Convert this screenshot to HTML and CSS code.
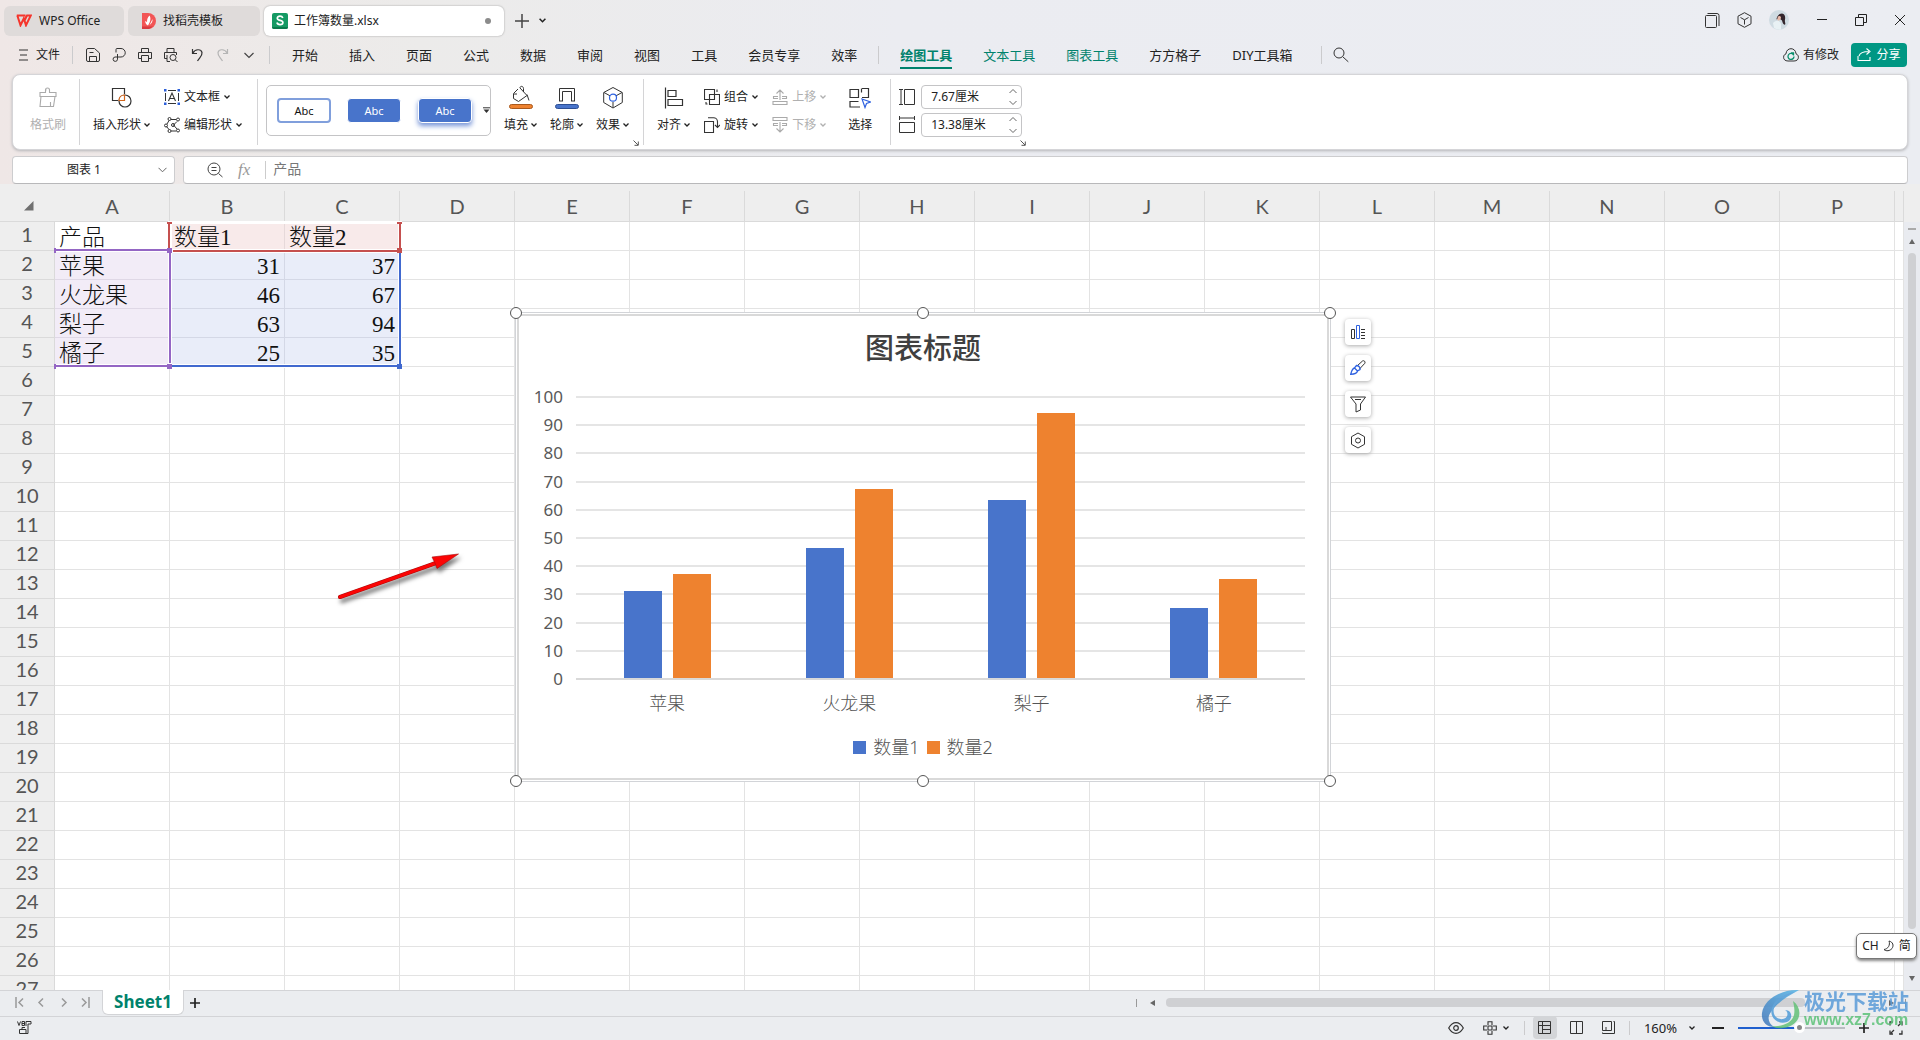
FILE: index.html
```html
<!DOCTYPE html>
<html lang="zh-CN">
<head>
<meta charset="utf-8">
<title>工作簿数量.xlsx - WPS Office</title>
<link rel="stylesheet" href="styles.css">
</head>
<body>
<svg class="defs" aria-hidden="true">
  <symbol id="chev" viewBox="0 0 6 6"><path d="M.5 1.500 3 4 5.500 1.500" fill="none" stroke="currentColor" stroke-width="1.300"/></symbol>
  <symbol id="launch" viewBox="0 0 6 6"><path d="M.5.5 5 5M5.300 1.500V5.300H1.500" fill="none" stroke="currentColor"/></symbol>
</svg>

<header class="titlebar">
  <nav class="doc-tabs">
    <button class="doc-tab tab-home"><svg width="16" height="13" viewBox="0 0 16 13"><path d="M.8 1.500H9.500M1.300 1.500 4.500 11.300 7.800 4.500 10 11.300 14.800 1.500H11L8.300 7" fill="none" stroke="#f5352c" stroke-width="2"/></svg>WPS Office</button>
    <button class="doc-tab tab-tpl"><svg width="15" height="16" viewBox="0 0 15 16"><path d="M1 0h6a8 8 0 0 1 0 16H1z" fill="#f25555"/><path d="M1 13.500h11L8 16H1z" fill="#d93a3f"/><path d="M8.500 2.500c2 3 .5 7-1.500 10-2-1-2.500-2-3-4.500l2 1c0-3 .5-4.500 2.500-6.500zM11.500 6c.5 3-1.500 5-3 6z" fill="#fff"/></svg>找稻壳模板</button>
    <button class="doc-tab tab-file active"><svg width="16" height="16" viewBox="0 0 16 16"><rect width="16" height="16" rx="2" fill="#159a64"/><path d="M0 14h16v0a2 2 0 0 1-2 2H2a2 2 0 0 1-2-2z" fill="#0b7a4c"/><path d="M10.800 5C10.300 3.600 9.300 3.200 8 3.200c-1.600 0-2.700.8-2.700 2 0 2.800 5.600 1.500 5.600 4.300 0 1.300-1.200 2.100-2.900 2.100-1.600 0-2.700-.7-3-2.100" fill="none" stroke="#fff" stroke-width="1.700"/></svg>工作簿数量.xlsx<span class="dot"></span></button>
    <button class="icon-btn new-tab" aria-label="新建"><svg width="14" height="14" viewBox="0 0 14 14"><path d="M7 0v14M0 7h14" stroke="#444" stroke-width="1.500"/></svg></button>
    <button class="icon-btn" aria-label="更多"><svg width="7" height="7"><use href="#chev"/></svg></button>
  </nav>
  <div class="window-tools">
    <button class="icon-btn" aria-label="窗口"><svg width="15" height="15" viewBox="0 0 15 15"><rect x=".5" y="2.500" width="11" height="12" rx="1" fill="none" stroke="#333"/><path d="M2.500.5H12a2 2 0 0 1 2 2V13" fill="none" stroke="#333"/></svg></button>
    <button class="icon-btn" aria-label="应用"><svg width="15" height="16" viewBox="0 0 15 16"><path d="M7.500.7 14 4.200v7.600l-6.500 3.500L1 11.800V4.200zM3.500 5.500l4 2.300 4-2.300M7.500 7.800v4.700" fill="none" stroke="#333"/></svg></button>
    <button class="icon-btn" aria-label="账户"><svg width="20" height="20" viewBox="0 0 20 20"><circle cx="10" cy="10" r="10" fill="#cfdbe2"/><path d="M13 3.500c3 .5 3.500 3 3 6s1 4 0 5-2.500-1.500-3-4l-2.500-2C9 9 8 9 7.500 9.500 7.500 7 9.500 3.500 13 3.500z" fill="#33262d"/><path d="M9 6.500c1-1 3-.5 3 1s-1 3-2.500 3S8.200 8 9 6.500z" fill="#e6b9a8"/><path d="M4 13c3-3 7-3 8 1l0 5.500a10 10 0 0 1-7-1.500z" fill="#e8f1f4"/></svg></button>
    <button class="icon-btn win" aria-label="最小化"><svg width="12" height="12" viewBox="0 0 12 12"><path d="M1 5.500h10" stroke="#222"/></svg></button>
    <button class="icon-btn win" aria-label="还原"><svg width="12" height="12" viewBox="0 0 12 12"><path d="M.5 3.500h8v8h-8zM3.500 3.500v-3h8v8h-3" fill="none" stroke="#222"/></svg></button>
    <button class="icon-btn win" aria-label="关闭"><svg width="12" height="12" viewBox="0 0 12 12"><path d="M1 1l10 10M11 1 1 11" stroke="#222"/></svg></button>
  </div>
</header>

<div class="menubar">
  <button class="file-btn"><svg width="9" height="12" viewBox="0 0 9 12"><path d="M0 1h9M1 6h7M0 11h9" stroke="#333"/></svg>文件</button>
  <span class="sep"></span>
  <div class="quick">
    <button class="icon-btn" aria-label="保存"><svg width="14" height="14" viewBox="0 0 14 14"><path d="M.5 2a1.500 1.500 0 0 1 1.500-1.500h6.500l5 4.500V12a1.500 1.500 0 0 1-1.500 1.500H2A1.500 1.500 0 0 1 .5 12zM3.500 13V8.500h7V13M3.500 4.500h4" fill="none" stroke="#333"/></svg></button>
    <button class="icon-btn" aria-label="导出"><svg width="14" height="14" viewBox="0 0 14 14"><path d="M4 4.500V1.500a1 1 0 0 1 1-1h4a4 4 0 0 1 0 8.500H3a2.200 2.200 0 1 0 2.500 2.200V6" fill="none" stroke="#333"/></svg></button>
    <button class="icon-btn" aria-label="打印"><svg width="14" height="14" viewBox="0 0 14 14"><path d="M3.500 4V.5h7V4M3 10.500H.5V4.500h13v6H11M3.500 7.500h7v6h-7z" fill="none" stroke="#333"/></svg></button>
    <button class="icon-btn" aria-label="打印预览"><svg width="14" height="14" viewBox="0 0 14 14"><path d="M3 4V.5h7V4M3 10.500H.5V4.500h12V7M3 7v6.500h3" fill="none" stroke="#333"/><circle cx="9" cy="9.500" r="3" fill="none" stroke="#333"/><path d="M11.200 11.700 13.500 14" stroke="#333"/></svg></button>
    <button class="icon-btn" aria-label="撤消"><svg width="14" height="14" viewBox="0 0 14 14"><path d="M2.500 1v4.500H7M3 5C5 1 11 .5 12 4.500c.5 3-2 4.500-4.500 8.500" fill="none" stroke="#333" stroke-width="1.200"/></svg></button>
    <button class="icon-btn" aria-label="恢复"><svg width="14" height="14" viewBox="0 0 14 14"><path d="M11.500 1v4.500H7M11 5C9 1 3 .5 2 4.500c-.5 3 2 4.500 4.500 8.500" fill="none" stroke="#b5b5b5" stroke-width="1.200"/></svg></button>
    <button class="icon-btn" aria-label="自定义"><svg width="14" height="14" viewBox="0 0 14 14"><path d="M2.500 5 7 9.500 11.500 5" fill="none" stroke="#444" stroke-width="1.200"/></svg></button>
  </div>
  <span class="sep"></span>
  <nav class="menus">
    <button>开始</button><button>插入</button><button>页面</button><button>公式</button><button>数据</button><button>审阅</button><button>视图</button><button>工具</button><button>会员专享</button><button>效率</button>
  </nav>
  <span class="sep"></span>
  <nav class="menus context">
    <button class="teal current">绘图工具</button><button class="teal">文本工具</button><button class="teal">图表工具</button><button>方方格子</button><button>DIY工具箱</button>
  </nav>
  <span class="sep"></span>
  <button class="icon-btn find" aria-label="搜索"><svg width="16" height="16" viewBox="0 0 16 16"><circle cx="6" cy="6" r="5" fill="none" stroke="#333"/><path d="m9.800 9.800 5.500 5" stroke="#333"/></svg></button>
  <div class="share-area">
    <button class="changes"><svg width="16" height="14" viewBox="0 0 16 14"><path d="M5 13C2 13 .6 11.300.6 9.300.6 7.500 1.500 6.300 3 5.800 3.200 2.500 5.500.7 8 .7s4.800 1.800 5 5.100c1.500.5 2.400 1.700 2.400 3.500C15.400 11.300 14 13 11 13z" fill="none" stroke="#333"/><path d="M10.300 6.500a3 3 0 1 0 .7 2M8 5h2.500v2.500" fill="none" stroke="#0a8f6c" stroke-width="1.300"/></svg>有修改</button>
    <button class="share"><svg width="15" height="14" viewBox="0 0 15 14"><path d="M1 8v4.500h12V9M2 8c1-3.500 4-4.500 10-4.500M9.500.5l3.500 3-3.500 3" fill="none" stroke="#fff" stroke-width="1.100"/></svg>分享</button>
  </div>
</div>

<section class="ribbon">
  <div class="group g-brush">
    <button class="big off"><svg width="20" height="24" viewBox="0 0 20 24"><path d="M2 11.500v-4h5.500V5a2 2 0 1 1 4 0v2.500H18v4zM3 11.500 2 21.500h13.500L17 11.500M12.500 21v-4M8 4.500v1" fill="none" stroke="#aaa" stroke-width="1.100"/></svg><span>格式刷</span></button>
  </div>
  <div class="group g-insert">
    <button class="big"><svg width="22" height="24" viewBox="0 0 22 24"><path d="M7 15.500H1.500v-12h12V9" fill="none" stroke="#333" stroke-width="1.200"/><circle cx="14" cy="16" r="6" fill="none" stroke="#333" stroke-width="1.200"/><path d="M8 15.500C8 12 10.500 10 13.500 10v5.500z" fill="#fff" stroke="#d2651c" stroke-width="1.200"/></svg><span>插入形状<svg class="c"><use href="#chev"/></svg></span></button>
    <div class="pair">
      <button><svg width="16" height="16" viewBox="0 0 16 16"><path d="M1.500 4v8M14.500 4v8M4 1.500h8M4 14.500h8" stroke="#333"/><path d="M0 0h2.500v2.500H0zM13.500 0H16v2.500h-2.500zM0 13.500h2.500V16H0zM13.500 13.500H16V16h-2.500z" fill="#2b5fd9"/><path d="M4.500 12 8 4l3.500 8M5.700 9.500h4.600" fill="none" stroke="#333" stroke-width="1.100"/></svg>文本框<svg class="c"><use href="#chev"/></svg></button>
      <button><svg width="16" height="16" viewBox="0 0 16 16"><g fill="none" stroke="#333"><path d="M3 7 5 3.500M7 2.500h5M13 4.500 9.500 8l3.500 4M12 14H7M5 12.500 2.500 9.500"/><circle cx="5.500" cy="2" r="1.500"/><circle cx="14" cy="2.500" r="1.500"/><circle cx="2" cy="8.500" r="1.500"/><circle cx="9" cy="8" r="1.500"/><circle cx="5.500" cy="14" r="1.500"/><circle cx="14" cy="13.500" r="1.500"/></g></svg>编辑形状<svg class="c"><use href="#chev"/></svg></button>
    </div>
  </div>
  <div class="group g-style">
    <div class="gallery">
      <button class="sw sw-line">Abc</button><button class="sw sw-fill">Abc</button><button class="sw sw-glow">Abc</button>
      <button class="more" aria-label="更多样式"><svg width="7" height="7" viewBox="0 0 7 7"><path d="M0 .8h7" stroke="#333"/><path d="M.5 2.500h6L3.500 6z" fill="#333"/></svg></button>
    </div>
    <button class="big"><svg width="24" height="24" viewBox="0 0 24 24"><path d="M9 4 4.500 8.500v5l5 3 8.500-6L11 3c-.5-1.500 3-3 3.500.5V7M18 9.500l2 6M5 9h3" fill="none" stroke="#333"/><rect x=".5" y="19.500" width="23" height="4" rx="2" fill="#ee822f" stroke="#a8581c"/></svg><span>填充<svg class="c"><use href="#chev"/></svg></span></button>
    <button class="big"><svg width="24" height="24" viewBox="0 0 24 24"><path d="M4.500 16V3.500h15V16M7.500 16V6.500h9V16M4 16h4M16 16h4" fill="none" stroke="#333"/><rect x=".5" y="19.500" width="23" height="4" rx="2" fill="#4874cb" stroke="#2d4f94"/></svg><span>轮廓<svg class="c"><use href="#chev"/></svg></span></button>
    <button class="big"><svg width="24" height="24" viewBox="0 0 24 24"><path d="M12 2.500 21.300 7.500v10L12 23l-9.300-5.500v-10zM3 7.500l6 3.300M21 7.500l-6 3.300M12 17v5.500" fill="none" stroke="#333"/><circle cx="12" cy="12.700" r="3.500" fill="none" stroke="#2f62e0" stroke-width="1.200"/></svg><span>效果<svg class="c"><use href="#chev"/></svg></span></button>
    <button class="launch" aria-label="形状格式"><svg width="6" height="6"><use href="#launch"/></svg></button>
  </div>
  <div class="group g-arrange">
    <button class="big"><svg width="20" height="24" viewBox="0 0 20 24"><path d="M1.500 2.500v21M4 5.500h8v6H4zM4 14.500h14.500v6H4z" fill="none" stroke="#333" stroke-width="1.200"/></svg><span>对齐<svg class="c"><use href="#chev"/></svg></span></button>
    <div class="pair">
      <button><svg width="16" height="16" viewBox="0 0 16 16"><path d="M.5.5h10v10H.5zM5.500 5.500h10v10h-10zM2 13v2h1.500M13 .5V3" fill="none" stroke="#333" stroke-width="1.100"/></svg>组合<svg class="c"><use href="#chev"/></svg></button>
      <button><svg width="16" height="16" viewBox="0 0 16 16"><path d="M.5 4.500h9v11h-9zM4 .8h5.500a4 4 0 0 1 4 4V10M11 8l2.500 2.500L16 8" fill="none" stroke="#333" stroke-width="1.100"/></svg>旋转<svg class="c"><use href="#chev"/></svg></button>
    </div>
    <div class="pair">
      <button class="off"><svg width="16" height="16" viewBox="0 0 16 16"><path d="M1 12.500h14v3H1zM6 9.500H1.500v-2H6M10 9.500h4.500v-2H10M8 11V1M4.500 4.500 8 1l3.500 3.500" fill="none" stroke="#aaa" stroke-width="1.100"/></svg>上移<svg class="c"><use href="#chev"/></svg></button>
      <button class="off"><svg width="16" height="16" viewBox="0 0 16 16"><path d="M1 .5h14v3H1zM6 8.500H1.500v-2H6M10 8.500h4.500v-2H10M8 5v10M4.500 11.500 8 15l3.500-3.500" fill="none" stroke="#aaa" stroke-width="1.100"/></svg>下移<svg class="c"><use href="#chev"/></svg></button>
    </div>
    <button class="big pick"><svg width="22" height="24" viewBox="0 0 22 24"><path d="M1 4.500V12.500H9.500V4.500zM13 3.500h6.500v9H13M12.500 3.500v4M1 16v6h10M1 16.500h8.500" fill="none" stroke="#333" stroke-width="1.200"/><path d="m13 14 8.500 3-4 1.500L16 22.500z" fill="#fff" stroke="#2f62e0" stroke-width="1.200"/></svg><span>选择</span></button>
  </div>
  <div class="group g-size">
    <div class="sizes">
      <label><svg width="16" height="18" viewBox="0 0 16 18"><path d="M2 1.500v15M0 1.500h4M0 16.500h4M5.500 1.500h10v15h-10z" fill="none" stroke="#333"/></svg><span class="spin"><input aria-label="高度" value="7.67厘米"><svg width="8" height="18" viewBox="0 0 8 18"><path d="M.5 5 4 1.500 7.500 5M.5 13 4 16.500 7.500 13" fill="none" stroke="#666"/></svg></span></label>
      <label><svg width="16" height="18" viewBox="0 0 16 18"><path d="M.5 2h15M.5 0v4M15.500 0v4M.5 6.500h15v10H.5z" fill="none" stroke="#333"/></svg><span class="spin"><input aria-label="宽度" value="13.38厘米"><svg width="8" height="18" viewBox="0 0 8 18"><path d="M.5 5 4 1.500 7.500 5M.5 13 4 16.500 7.500 13" fill="none" stroke="#666"/></svg></span></label>
    </div>
    <button class="launch" aria-label="大小"><svg width="6" height="6"><use href="#launch"/></svg></button>
  </div>
</section>

<section class="formula-row">
  <div class="name-box"><input aria-label="名称框" value="图表 1"><svg width="9" height="6" viewBox="0 0 9 6"><path d="m.5.8 4 4 4-4" fill="none" stroke="#666"/></svg></div>
  <div class="formula-box">
    <svg width="16" height="16" viewBox="0 0 16 16"><circle cx="7" cy="7" r="6" fill="none" stroke="#444"/><path d="M4.500 5.500h5M4.500 8.500h5M11.500 11.500l4 3.500" stroke="#444" fill="none"/></svg>
    <em class="fx">fx</em>
    <input aria-label="编辑栏" value="产品">
  </div>
</section>

<main class="sheet">
  <div class="grid-area">
    <table class="grid">
      <colgroup id="cols"><col class="col-head"></colgroup>
      <thead><tr id="letters"><th class="corner"><svg width="10" height="10" viewBox="0 0 10 10"><path d="M9.500 0v9.500H0z" fill="#707070"/></svg></th></tr></thead>
      <tbody id="rows">
        <tr><th>1</th><td>产品</td><td class="r">数量1</td><td class="r">数量2</td></tr>
        <tr><th>2</th><td class="p">苹果</td><td class="n">31</td><td class="n">37</td></tr>
        <tr><th>3</th><td class="p">火龙果</td><td class="n">46</td><td class="n">67</td></tr>
        <tr><th>4</th><td class="p">梨子</td><td class="n">63</td><td class="n">94</td></tr>
        <tr><th>5</th><td class="p">橘子</td><td class="n">25</td><td class="n">35</td></tr>
      </tbody>
    </table>
    <svg class="ranges" width="352" height="152" viewBox="0 0 352 152" aria-hidden="true">
      <g fill="none" stroke="#fff" stroke-width="4"><path d="M116 0v30h230V0M116 1h230M1 29h115v116H1M116 145h230V30"/></g>
      <g fill="none" stroke-width="2"><path d="M346 32v113H118" stroke="#4169cf"/><path d="M115 3v24M119 30h226M346 3v24M113 2h5M343 2h5" stroke="#c5504f"/><path d="M2 29h112M116 32v110M2 145h112M1 27v5M1 143v5" stroke="#9466c4"/></g>
      <path d="M113 27h5v5h-5zM113 143h5v5h-5z" fill="#9466c4"/><path d="M343 27h5v5h-5z" fill="#c5504f"/><path d="M343 143h5v5h-5z" fill="#4169cf"/>
    </svg>
    <svg class="pointer" width="140" height="60" viewBox="0 0 140 60" aria-hidden="true"><path d="m6 44 96-34" stroke="#a80c0c" stroke-width="4" stroke-linecap="round"/><path d="m6 44 96-34" stroke="#fb0505" stroke-width="3" stroke-linecap="round"/><path d="m98 4 26.500-3L103 15.500l-2-5.500z" fill="#fb0505" stroke="#a80c0c" stroke-width=".6"/></svg>

    <figure class="chart">
      <div class="chart-body">
        <figcaption>图表标题</figcaption>
        <div class="plot-row">
          <div class="axis"><span>100</span><span>90</span><span>80</span><span>70</span><span>60</span><span>50</span><span>40</span><span>30</span><span>20</span><span>10</span><span>0</span></div>
          <div class="plot">
            <div class="lines"><i></i><i></i><i></i><i></i><i></i><i></i><i></i><i></i><i></i><i></i><i></i></div>
            <div class="bars">
              <div><b style="height:31%"></b><b class="o" style="height:37%"></b></div>
              <div><b style="height:46%"></b><b class="o" style="height:67%"></b></div>
              <div><b style="height:63%"></b><b class="o" style="height:94%"></b></div>
              <div><b style="height:25%"></b><b class="o" style="height:35%"></b></div>
            </div>
          </div>
        </div>
        <div class="cats"><span>苹果</span><span>火龙果</span><span>梨子</span><span>橘子</span></div>
        <div class="legend"><span class="key"></span>数量1<span class="key o"></span>数量2</div>
      </div>
      <span class="h tl"></span><span class="h tc"></span><span class="h tr"></span><span class="h bl"></span><span class="h bc"></span><span class="h br"></span>
      <div class="chart-tools">
        <button aria-label="图表元素"><svg width="16" height="16" viewBox="0 0 16 16"><path d="M1.500 5.500h3v9h-3z" fill="none" stroke="#333"/><path d="M6.500 1.500h3v13h-3z" fill="none" stroke="#2f62e0"/><path d="M11 5.500h4M11 8.500h4M11 11.500h4M11 14.500h4" stroke="#333"/></svg></button>
        <button aria-label="图表样式"><svg width="16" height="16" viewBox="0 0 16 16"><path d="m7 6 5.500-5c1.500-1 3.300.8 2.300 2.300L9.500 9" fill="none" stroke="#333"/><path d="M6.500 5.500c2 0 4 2 3.500 4L7.500 11c-.5 2.500-3 3.200-6.800 3.300C1.500 11.500 2 8.500 4.500 8zM4.500 8 7.500 11" fill="none" stroke="#2f62e0" stroke-width="1.300"/></svg></button>
        <button aria-label="筛选"><svg width="16" height="17" viewBox="0 0 16 17"><path d="M.5 1h15L10.500 8v6L6 16V8zM5 3.500h6" fill="none" stroke="#333"/></svg></button>
        <button aria-label="设置"><svg width="16" height="17" viewBox="0 0 16 17"><path d="m8 1 6.500 3.700v7.600L8 16l-6.500-3.700V4.700z" fill="none" stroke="#333"/><circle cx="8" cy="8.500" r="2.500" fill="none" stroke="#333"/></svg></button>
      </div>
    </figure>
  </div>
  <div class="vscroll"><span class="split"></span><svg width="6" height="5" viewBox="0 0 6 5"><path d="M3 0 6 5H0z" fill="#666"/></svg><span class="thumb"></span><svg width="6" height="5" viewBox="0 0 6 5"><path d="M3 5 6 0H0z" fill="#666"/></svg></div>
  <div class="ime">CH <svg width="12" height="12" viewBox="0 0 12 12"><path d="M6 1c4 1 5 4.500 3 7.500C7 11 3 11.500 1 9.500 5 9 7.500 5 6 1z" fill="none" stroke="#333"/></svg> 简</div>
</main>

<div class="sheet-bar">
  <div class="sheet-nav">
    <button class="icon-btn" aria-label="首张"><svg width="9" height="11" viewBox="0 0 9 11"><path d="M1 0v11M8 1.500 4 5.500l4 4" fill="none" stroke="#999" stroke-width="1.500"/></svg></button>
    <button class="icon-btn" aria-label="上一张"><svg width="9" height="11" viewBox="0 0 9 11"><path d="m6 1.500-4 4 4 4" fill="none" stroke="#999" stroke-width="1.500"/></svg></button>
    <button class="icon-btn" aria-label="下一张"><svg width="9" height="11" viewBox="0 0 9 11"><path d="m3 1.500 4 4-4 4" fill="none" stroke="#999" stroke-width="1.500"/></svg></button>
    <button class="icon-btn" aria-label="末张"><svg width="9" height="11" viewBox="0 0 9 11"><path d="M8 0v11M1 1.500l4 4-4 4" fill="none" stroke="#999" stroke-width="1.500"/></svg></button>
  </div>
  <button class="sheet-tab">Sheet1</button>
  <button class="icon-btn add" aria-label="新建工作表"><svg width="10" height="10" viewBox="0 0 10 10"><path d="M5 0v10M0 5h10" stroke="#222" stroke-width="1.700"/></svg></button>
  <div class="hscroll"><span class="split"></span><svg width="5" height="6" viewBox="0 0 5 6"><path d="M0 3 5 0v6z" fill="#666"/></svg><div class="track"><span class="thumb"></span></div><svg width="5" height="6" viewBox="0 0 5 6"><path d="M5 3 0 0v6z" fill="#666"/></svg><span class="split"></span></div>
</div>

<footer class="status">
  <svg width="15" height="14" viewBox="0 0 15 14"><path d="m.5.5 1.500 4 1.500-4M5 .5v4h2.500v-4zM5 2.500h2.500M9 5V.5h5V3h-3M11 3v9.500H2.500v-4H9V12M5 8.500v-2h3" fill="none" stroke="#333"/></svg>
  <div class="status-tools">
    <button class="icon-btn" aria-label="护眼"><svg width="16" height="12" viewBox="0 0 16 12"><path d="M.7 6C3 2 5.500.7 8 .7S13 2 15.300 6C13 10 10.500 11.300 8 11.300S3 10 .7 6z" fill="none" stroke="#333" stroke-width="1.200"/><circle cx="8" cy="6" r="2.300" fill="none" stroke="#333" stroke-width="1.200"/></svg></button>
    <button class="icon-btn read" aria-label="阅读模式"><svg width="14" height="14" viewBox="0 0 14 14"><path d="M5 4V.7h4V4M5 10v3.300h4V10M4 5H.7v4H4M10 5h3.300v4H10M5 5h4v4H5z" fill="none" stroke="#333" stroke-width="1.100"/></svg><svg class="c"><use href="#chev"/></svg></button>
    <span class="sep"></span>
    <button class="view on" aria-label="普通视图"><svg width="13" height="13" viewBox="0 0 13 13"><path d="M.5.5h12v12H.5zM.5 4.500h12M4.500.5v12M4.500 8.500h8" fill="none" stroke="#333"/></svg></button>
    <button class="view" aria-label="分页预览"><svg width="13" height="13" viewBox="0 0 13 13"><path d="M.5.5h12v12H.5zM6.500.5v12" fill="none" stroke="#333"/></svg></button>
    <button class="view" aria-label="页面布局"><svg width="13" height="13" viewBox="0 0 13 13"><path d="M.5.5h9v9h-9zM11.500.5h1v12H.5v-1M4 9.500V6" fill="none" stroke="#333"/></svg></button>
    <span class="sep"></span>
    <button class="zoom">160%<svg class="c"><use href="#chev"/></svg></button>
    <button class="icon-btn" aria-label="缩小"><svg width="12" height="12" viewBox="0 0 12 12"><path d="M0 6h12" stroke="#222" stroke-width="2"/></svg></button>
    <input class="slider" type="range" aria-label="缩放" min="0" max="100" value="58">
    <button class="icon-btn in" aria-label="放大"><svg width="10" height="10" viewBox="0 0 10 10"><path d="M5 0v10M0 5h10" stroke="#222" stroke-width="1.700"/></svg></button>
    <button class="icon-btn full" aria-label="全屏"><svg width="14" height="14" viewBox="0 0 14 14"><path d="M1 4.500V1h3M10 1h3v3.500M13 9.500V13h-3M4 13H1V9.500M9 5l3-3M5 9l-3 3" fill="none" stroke="#333" stroke-width="1.300"/></svg></button>
  </div>
</footer>

<div class="watermark" aria-hidden="true">
  <svg width="44" height="42" viewBox="0 0 44 42"><defs><linearGradient id="wa" x1="1" y1="0" x2="0" y2="1"><stop offset="0" stop-color="#55b6e8"/><stop offset="1" stop-color="#3f74b8"/></linearGradient></defs><path d="M39 1C22 0 4 10 2 24c-1 8 4 14 12 14-6-4-7-10-3-15C16 15 26 8 39 1z" fill="url(#wa)"/><path d="M35 3c-12 5-19 10-21 16-2 7 3 12 9 11 5-1 6-7 2-9 8 0 8 10 2 12-10 3-18-5-15-14C14 11 23 5 35 3z" fill="#4f9bd8"/><path d="M33 12c11 8 8 25-10 27-4 .5-8 0-11-2 12 1 20-4 22-11 1-5 0-9-1-14z" fill="#63c178"/></svg>
  <div class="wm-text"><strong>极光下载站</strong><span>www.xz7.com</span></div>
</div>
<script src="app.js"></script>
</body>
</html>
```
FILE: styles.css
```css
* { box-sizing: border-box; }
body {
  margin: 0; height: 100vh; overflow: hidden;
  display: flex; flex-direction: column;
  font: 12px/18px "Noto Sans", "Noto Sans CJK SC", sans-serif; color: #222;
  background: linear-gradient(90deg, #efe7e6 0, #ecebea 420px, #ebecf1 900px, #ebedf2 100%);
}
button { font: inherit; color: inherit; border: 0; background: none; padding: 0; display: flex; align-items: center; white-space: nowrap; }
input { font: inherit; color: inherit; border: 0; background: none; padding: 0; min-width: 0; outline: 0; }
svg { display: block; flex: none; }
.defs { position: absolute; width: 0; height: 0; }
.c { width: 6px; height: 6px; }
.icon-btn { justify-content: center; }
.sep { width: 1px; height: 18px; background: #cbcbcd; flex: none; }

.titlebar { height: 37px; flex: none; display: flex; justify-content: space-between; padding: 5px 14px 0 4px; }
.doc-tabs { display: flex; gap: 4px; align-items: center; height: 31px; }
.doc-tab { height: 30px; border-radius: 6px; background: #dfdbda; gap: 7px; }
.tab-home { width: 120px; padding-left: 12px; }
.tab-tpl { width: 132px; padding-left: 13px; }
.tab-file { width: 240px; padding: 0 13px 0 8px; gap: 6px; }
.doc-tab.active { background: #fff; box-shadow: 0 0 2px #999; }
.dot { width: 6px; height: 6px; border-radius: 50%; background: #8b8b8b; margin-left: auto; }
.new-tab { margin: 0 6px 0 7px; }
.window-tools { display: flex; gap: 17px; align-items: center; height: 30px; }
.win { margin-left: 10px; }

.menubar { height: 37px; flex: none; display: flex; align-items: center; padding: 0 13px 2px 19px; }
.file-btn { gap: 8px; margin-right: 12px; }
.quick { display: flex; gap: 12px; margin: 0 13px 0 13px; }
.menus { display: flex; gap: 31px; font-size: 13px; margin: 0 21px 0 22px; height: 28px; }
.menus.context { margin-right: 28px; margin-left: 21px; }
.menus button { height: 28px; border-top: 2px solid transparent; border-bottom: 2px solid transparent; }
.menus .teal { color: #00826c; }
.menus .current { font-weight: 700; border-bottom-color: #00826c; }
.find { margin-left: 11px; }
.share-area { margin-left: auto; display: flex; gap: 12px; align-items: center; }
.changes { gap: 4px; }
.share { background: #009783; color: #fff; width: 56px; height: 24px; border-radius: 4px; gap: 4px; justify-content: center; }

.ribbon { height: 76px; flex: none; margin: 0 12px; background: #fff; border: 1px solid #d5d5d8; border-radius: 8px; box-shadow: 0 1px 3px #b5b5b8; display: flex; padding: 4px 0; }
.group { display: flex; align-items: flex-start; padding-top: 6px; border-right: 1px solid #d4d4d6; position: relative; }
.group:last-child { border-right: 0; }
.g-brush { padding-left: 17px; padding-right: 13px; }
.g-insert { padding-left: 13px; padding-right: 15px; gap: 14px; }
.g-style { padding-left: 8px; padding-right: 14px; gap: 13px; }
.g-arrange { padding-left: 13px; padding-right: 18px; gap: 14px; }
.g-size { padding-left: 8px; padding-right: 4px; }
.big { flex-direction: column; gap: 4px; }
.big span { display: flex; align-items: center; gap: 3px; line-height: 24px; height: 24px; }
.pick { margin-left: 8px; }
.off { color: #b0b0b0; }
.pair { display: flex; flex-direction: column; gap: 4px; }
.pair button { height: 24px; gap: 4px; }
.gallery { width: 225px; height: 51px; border: 1px solid #c4c4c6; border-radius: 5px; display: flex; align-items: center; padding-left: 10px; }
.sw { width: 54px; height: 25px; border-radius: 4px; justify-content: center; color: #fff; background: #4874cb; font-size: 11px; margin-right: 17px; border: 1px solid #fff; }
.sw-line { background: #fff; color: #111; border: 2px solid #809fdc; margin-right: 16px; }
.sw-glow { box-shadow: 0 3px 5px #7896d8; margin-right: 11px; }
.launch { position: absolute; right: 4px; bottom: -1px; color: #555; }
.g-size .launch { right: 0; }
.sizes { display: flex; flex-direction: column; gap: 4px; }
.sizes label { display: flex; align-items: center; gap: 6px; }
.spin { width: 101px; height: 24px; border: 1px solid #c4c4c6; border-radius: 4px; display: flex; align-items: center; padding: 0 4px 0 9px; }
.spin input { flex: 1; }

.formula-row { flex: none; height: 34px; display: flex; gap: 8px; padding: 6px 12px 0 12px; }
.name-box, .formula-box { background: #fff; border: 1px solid #cdcdcf; border-bottom-color: #b8b8ba; border-radius: 4px; display: flex; align-items: center; height: 28px; }
.name-box { width: 163px; padding: 0 7px 0 54px; }
.name-box input { flex: 1; }
.formula-box { flex: 1; padding-left: 23px; gap: 15px; }
.fx { font: italic 17px/20px "Liberation Serif", serif; color: #999; }
.formula-box input { flex: 1; border-left: 1px solid #ccc; font-size: 14px; color: #777; height: 18px; padding: 0 0 2px 7px; }

.sheet { flex: 1; min-height: 0; display: flex; background: #eee; padding-top: 7px; position: relative; }
.grid-area { flex: 1; min-width: 0; overflow: hidden; position: relative; background: #fff; }
.grid { border-collapse: separate; border-spacing: 0; table-layout: fixed; width: 100%; }
.col-head { width: 55px; }
.col-cell { width: 115px; }
.grid th { font: 20px/20px Lato, sans-serif; color: #555; background: #eee; padding: 0; border: solid #dadada; border-width: 0 1px 1px 0; overflow: hidden; }
.grid thead th { height: 31px; }
.grid .corner { padding: 0 21px 0 24px; border-right: 0; }
.grid tbody tr { height: 29px; }
.grid tbody th { height: 29px; padding-bottom: 4px; }
.grid td { height: 29px; border: solid #e3e3e3; border-width: 0 1px 1px 0; padding: 2px 4px 0; font: 300 23px/25px "Liberation Serif", "Noto Sans CJK SC", serif; color: #111; overflow: hidden; white-space: nowrap; }
.grid .r { background: #f8eaea; border-color: #e6d9da; }
.grid .p { background: #f2ecf7; border-color: #dfd8e6; }
.grid .n { background: #e9edf9; border-color: #d4d8e6; text-align: right; }
.ranges { position: absolute; left: 54px; top: 30px; }
.pointer { position: absolute; left: 334px; top: 362px; filter: drop-shadow(2px 4px 2px #777); }

.chart { position: absolute; left: 515px; top: 121px; width: 816px; height: 470px; margin: 0; border: 1px solid #d2d4d8; background: #fff; padding: 1px; }
.chart-body { height: 100%; border: 2px solid #d9d9d9; display: flex; flex-direction: column; color: #555; }
.chart figcaption { font: 500 29px/40px "Noto Sans CJK SC", sans-serif; color: #404040; text-align: center; margin-top: 10px; }
.plot-row { display: flex; margin: 30px 22px 0 13px; height: 284px; gap: 13px; }
.axis { width: 31px; margin: -10px 0; display: flex; flex-direction: column; justify-content: space-between; text-align: right; font-size: 17px; line-height: 22px; color: #595959; }
.plot { flex: 1; display: grid; }
.lines, .bars { grid-area: 1 / 1; }
.lines { display: flex; flex-direction: column; justify-content: space-between; }
.lines i { height: 2px; background: #e5e5e5; }
.lines i:last-child { background: #d9d9d9; }
.bars { display: grid; grid-template-columns: repeat(4, 1fr); height: 282px; }
.bars div { display: flex; justify-content: center; align-items: flex-end; gap: 11px; }
.bars b { width: 38px; background: #4874cb; }
.bars .o, .key.o { background: #ee822f; }
.cats { display: grid; grid-template-columns: repeat(4, 1fr); margin: 9px 22px 0 57px; text-align: center; font: 300 18px/26px "Noto Sans CJK SC", sans-serif; }
.legend { display: flex; justify-content: center; align-items: center; gap: 7px; margin-top: 19px; font: 300 18px/26px "Noto Sans", "Noto Sans CJK SC", sans-serif; }
.key { width: 13px; height: 13px; background: #4874cb; }
.h { position: absolute; width: 12px; height: 12px; border: 1px solid #555; border-radius: 50%; background: #fff; }
.tl, .bl { left: -6px; } .tc, .bc { left: 401px; } .tr, .br { right: -6px; }
.tl, .tc, .tr { top: -6px; } .bl, .bc, .br { bottom: -6px; }
.chart-tools { position: absolute; left: 829px; top: 6px; display: flex; flex-direction: column; gap: 10px; }
.chart-tools button { width: 26px; height: 26px; justify-content: center; background: #fff; border-radius: 4px; box-shadow: 0 1px 4px #aaa; }

.vscroll { width: 16px; margin-top: 31px; background: #e9ebf0; display: flex; flex-direction: column; align-items: center; padding: 6px 0 9px; }
.vscroll .split { width: 8px; height: 2px; background: #aaa; margin-bottom: 9px; }
.vscroll .thumb { width: 8px; flex: 1; margin: 9px 0 47px; border-radius: 4px; background: #cfd0d3; }
.ime { position: absolute; right: 3px; bottom: 31px; width: 61px; height: 26px; border: 1px solid #777; border-radius: 5px; background: #fff; box-shadow: 0 2px 3px #888; display: flex; gap: 4px; align-items: center; justify-content: center; }

.sheet-bar { height: 27px; flex: none; background: #ebedf0; border: solid #d3d4d7; border-width: 1px 0; display: flex; align-items: center; padding: 0 14px 2px 15px; }
.sheet-nav { display: flex; gap: 13px; margin-right: 12px; }
.sheet-tab { align-self: flex-start; width: 82px; height: 25px; margin-top: -1px; justify-content: center; background: #fff; border: 1px solid #d3d4d7; border-top: 0; border-radius: 0 0 6px 6px; color: #00826c; font-size: 17px; font-weight: 700; }
.add { margin-left: 6px; }
.hscroll { width: 770px; margin-left: auto; display: flex; align-items: center; }
.hscroll .split { width: 1px; height: 8px; background: #999; }
.hscroll svg { margin: 0 11px 0 13px; }
.hscroll .track { flex: 1; }
.hscroll .thumb { display: block; width: 90%; height: 9px; border-radius: 4px; background: #cfd0d3; }

.status { height: 23px; flex: none; background: #ebedf0; display: flex; align-items: center; justify-content: space-between; padding: 0 17px 2px; }
.status-tools { display: flex; align-items: center; }
.status .sep { height: 14px; }
.read { margin: 0 15px 0 19px; gap: 6px; }
.view { width: 24px; height: 23px; border-radius: 4px; justify-content: center; margin: 0 0 0 8px; }
.view.on { background: #d3d5d8; }
.view + .sep { margin: 0 14px 0 8px; }
.zoom { font-size: 13px; gap: 12px; margin-right: 17px; }
.slider { appearance: none; width: 107px; height: 12px; margin: 0 0 0 14px; background: linear-gradient(90deg, #1f5fce 58%, #b9bcc2 58%) center / 100% 2px no-repeat; }
.slider::-webkit-slider-thumb { appearance: none; width: 11px; height: 11px; border-radius: 50%; background: #888; border: 3px solid #fff; }
.in { margin: 0 20px 0 14px; }

.watermark { position: absolute; right: 11px; bottom: 9px; display: flex; opacity: .85; }
.wm-text { display: flex; flex-direction: column; }
.wm-text strong { font: 700 21px/22px "Noto Sans CJK SC", sans-serif; color: #5a9bd8; }
.wm-text span { font: 700 16px/18px "Liberation Sans", sans-serif; color: #5cc278; }
```
FILE: app.js
```js
// Fill in the column letters and the empty part of the grid.
const letters = 'ABCDEFGHIJKLMNOP';
const cols = document.getElementById('cols');
const head = document.getElementById('letters');
for (const letter of letters) {
  const col = document.createElement('col');
  col.className = 'col-cell';
  cols.append(col);
  const th = document.createElement('th');
  th.textContent = letter;
  head.append(th);
}
cols.append(document.createElement('col'));
head.append(document.createElement('th'));

const body = document.getElementById('rows');
for (let n = 1; n <= 27; n++) {
  let tr = body.rows[n - 1];
  if (!tr) {
    tr = body.insertRow();
    const th = document.createElement('th');
    th.textContent = n;
    tr.append(th);
  }
  while (tr.cells.length < letters.length + 2) tr.insertCell();
}
```
